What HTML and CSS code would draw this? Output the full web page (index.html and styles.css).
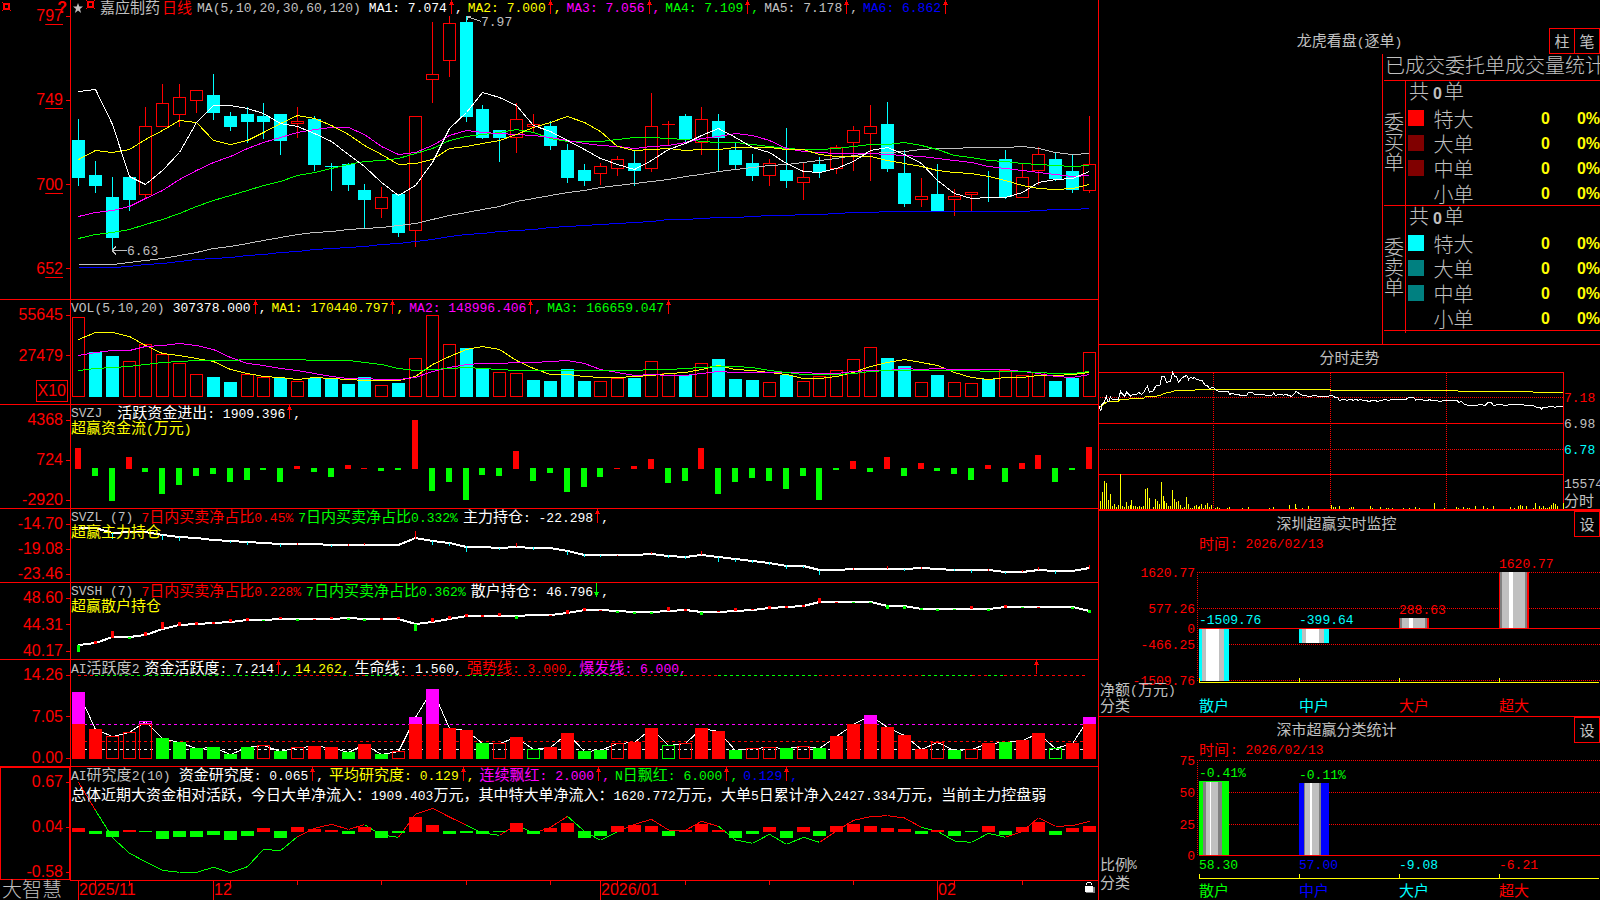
FILE: index.html
```html
<!DOCTYPE html>
<html lang="zh-CN">
<head>
<meta charset="utf-8">
<title>嘉应制药 日线</title>
<link rel="stylesheet" href="styles.css">
</head>
<body>
<main class="desk">
  <section class="charts">
    <article class="panel">
      <div class="axis axis-main">
        <svg class="mark mark-axis" viewBox="0 0 9 9"><path d="M1 1h7v7h-7zM3 3v3h3v-3z" fill="#f00" fill-rule="evenodd"/><path d="M0 0h1v1h-1zM8 8h1v1h-1zM0 8h1v1h-1z" fill="#f00"/></svg>
        <span class="help">?</span>
        <span class="tick">7<u>97</u></span><span class="tick">7<u>49</u></span><span class="tick">7<u>00</u></span><span class="tick">6<u>52</u></span>
      </div>
      <div class="plot">
        <svg id="kline" viewBox="71 0 1027 299" preserveAspectRatio="none"></svg>
        <header class="head">
          <span class="stock"><svg class="star" viewBox="0 0 10 10"><path d="M5 0l1.3 3.6H10L7 6l1.1 4L5 7.6 1.9 10 3 6 0 3.600h3.700z" fill="#c0c0c0"/></svg><svg class="mark" viewBox="0 0 9 9"><path d="M1 1h7v7h-7zM3 3v3h3v-3z" fill="#f00" fill-rule="evenodd"/><path d="M0 0h1v1h-1zM8 0h1v1h-1zM0 8h1v1h-1zM8 8h1v1h-1z" fill="#f00"/></svg></span>
          <span class="name">嘉应制药<span class="red">日线</span></span>
          <span class="n first">MA(5,10,20,30,60,120)</span>
          <span class="n white">MA1: 7.074<i class="up"></i>,</span>
          <span class="n yellow">MA2: 7.000<i class="up"></i>,</span>
          <span class="n magenta">MA3: 7.056<i class="up"></i>,</span>
          <span class="n green">MA4: 7.109<i class="up"></i>,</span>
          <span class="n">MA5: 7.178<i class="up"></i>,</span>
          <span class="n blue">MA6: 6.862<i class="up"></i></span>
        </header>
      </div>
    </article>

    <article class="panel">
      <div class="axis"><span class="tick">55645</span><span class="tick">27479</span><span class="unit">X10</span></div>
      <div class="plot">
        <svg id="vol" viewBox="71 300 1027 104" preserveAspectRatio="none"></svg>
        <header class="head">
          <span class="n first">VOL(5,10,20)</span>
          <span class="n white">307378.000<i class="up"></i>,</span>
          <span class="n yellow">MA1: 170440.797<i class="up"></i>,</span>
          <span class="n magenta">MA2: 148996.406<i class="up"></i>,</span>
          <span class="n green">MA3: 166659.047<i class="up"></i></span>
        </header>
      </div>
    </article>

    <article class="panel">
      <div class="axis"><span class="tick">4368</span><span class="tick">724</span><span class="tick">-2920</span></div>
      <div class="plot">
        <svg id="flow" viewBox="71 405 1027 103" preserveAspectRatio="none"></svg>
        <header class="head">
          <span class="n wide">SVZJ</span>
          <span class="white">活跃资金进出<span class="n">: 1909.396<i class="up"></i>,</span></span>
          <span class="sub yellow">超赢资金流<span class="n">(</span>万元<span class="n">)</span></span>
        </header>
      </div>
    </article>

    <article class="panel">
      <div class="axis"><span class="tick">-14.70</span><span class="tick">-19.08</span><span class="tick">-23.46</span></div>
      <div class="plot">
        <svg id="major" viewBox="71 509 1027 73" preserveAspectRatio="none"></svg>
        <header class="head">
          <span class="n first">SVZL (7)</span>
          <span class="red"><span class="n">7</span>日内买卖净占比<span class="n">0.45%</span></span>
          <span class="green"><span class="n">7</span>日内买卖净占比<span class="n">0.332%</span></span>
          <span class="white">主力持仓<span class="n">: -22.298<i class="up"></i>,</span></span>
          <span class="sub yellow">超赢主力持仓</span>
        </header>
      </div>
    </article>

    <article class="panel">
      <div class="axis"><span class="tick">48.60</span><span class="tick">44.31</span><span class="tick">40.17</span></div>
      <div class="plot">
        <svg id="retail" viewBox="71 583 1027 76" preserveAspectRatio="none"></svg>
        <header class="head">
          <span class="n first">SVSH (7)</span>
          <span class="red"><span class="n">7</span>日内买卖净占比<span class="n">0.228%</span></span>
          <span class="green"><span class="n">7</span>日内买卖净占比<span class="n">0.362%</span></span>
          <span class="white">散户持仓<span class="n">: 46.796<i class="up down"></i>,</span></span>
          <span class="sub yellow">超赢散户持仓</span>
        </header>
      </div>
    </article>

    <article class="panel">
      <div class="axis"><span class="tick">14.26</span><span class="tick">7.05</span><span class="tick">0.00</span></div>
      <div class="plot">
        <svg id="active" viewBox="71 660 1027 106" preserveAspectRatio="none"></svg>
        <header class="head">
          <span><span class="n">AI</span>活跃度<span class="n">2</span></span>
          <span class="white">资金活跃度<span class="n">: 7.214<i class="up"></i>,</span></span>
          <span class="yellow"><span class="n">14.262,</span></span>
          <span class="white">生命线<span class="n">: 1.560,</span></span>
          <span class="red">强势线<span class="n">: 3.000,</span></span>
          <span class="magenta">爆发线<span class="n">: 6.000,</span></span>
          <i class="up lone"></i>
        </header>
      </div>
    </article>

    <article class="panel">
      <div class="axis selected"><span class="tick">0.67</span><span class="tick">0.04</span><span class="tick">-0.58</span></div>
      <div class="plot">
        <svg id="study" viewBox="71 767 1027 113" preserveAspectRatio="none"></svg>
        <header class="head">
          <span class="first"><span class="n">AI</span>研究度<span class="n">2(10)</span></span>
          <span class="white">资金研究度<span class="n">: 0.065<i class="up"></i>,</span></span>
          <span class="yellow">平均研究度<span class="n">: 0.129<i class="up"></i>,</span></span>
          <span class="magenta">连续飘红<span class="n">: 2.000<i class="up"></i>,</span></span>
          <span class="green"><span class="n">N</span>日飘红<span class="n">: 6.000<i class="up"></i>,</span></span>
          <span class="blue"><span class="n">0.129<i class="up"></i>,</span></span>
          <p class="sub note white">总体近期大资金相对活跃，今日大单净流入：<span class="n">1909.403</span>万元，其中特大单净流入：<span class="n">1620.772</span>万元，大单<span class="n">5</span>日累计净入<span class="n">2427.334</span>万元，当前主力控盘弱</p>
        </header>
      </div>
    </article>

    <footer class="timeline">
      <span class="brand">大智慧</span>
      <svg id="dates" viewBox="70 881 1028 19" preserveAspectRatio="none"></svg>
    </footer>
  </section>

  <aside class="side">
    <section class="orders">
      <header class="bar bar-orders">
        <h2>龙虎看盘<span class="n">(</span>逐单<span class="n">)</span></h2>
        <div class="buttons"><button type="button">柱</button><button type="button">笔</button></div>
      </header>
      <div class="stats">
        <h3>已成交委托单成交量统计</h3>
        <div class="group">
          <div class="side-label">委买单</div>
          <table>
            <tr><th colspan="4" class="total">共<b>0</b>单</th></tr>
            <tr><td class="key"><i class="sw sw-red"></i></td><th>特大</th><td>0</td><td class="pct">0%</td></tr>
            <tr><td class="key"><i class="sw sw-maroon"></i></td><th>大单</th><td>0</td><td class="pct">0%</td></tr>
            <tr><td class="key"><i class="sw sw-maroon"></i></td><th>中单</th><td>0</td><td class="pct">0%</td></tr>
            <tr><td class="key"></td><th>小单</th><td>0</td><td class="pct">0%</td></tr>
          </table>
        </div>
        <div class="group">
          <div class="side-label">委卖单</div>
          <table>
            <tr><th colspan="4" class="total">共<b>0</b>单</th></tr>
            <tr><td class="key"><i class="sw sw-cyan"></i></td><th>特大</th><td>0</td><td class="pct">0%</td></tr>
            <tr><td class="key"><i class="sw sw-teal"></i></td><th>大单</th><td>0</td><td class="pct">0%</td></tr>
            <tr><td class="key"><i class="sw sw-teal"></i></td><th>中单</th><td>0</td><td class="pct">0%</td></tr>
            <tr><td class="key"></td><th>小单</th><td>0</td><td class="pct">0%</td></tr>
          </table>
        </div>
      </div>
    </section>

    <section class="card">
      <header class="bar"><h2>分时走势</h2></header>
      <svg id="trend" viewBox="1099 371 501 138" preserveAspectRatio="none"></svg>
    </section>

    <section class="card card-thick">
      <header class="bar"><h2>深圳超赢实时监控</h2><div class="buttons"><button type="button">设</button></div></header>
      <svg id="monitor" viewBox="1099 537 501 179" preserveAspectRatio="none"></svg>
    </section>

    <section class="card">
      <header class="bar"><h2>深市超赢分类统计</h2><div class="buttons"><button type="button">设</button></div></header>
      <svg id="classes" viewBox="1099 743 501 157" preserveAspectRatio="none"></svg>
    </section>
  </aside>
</main>
<script src="charts.js"></script>
</body>
</html>
```

FILE: styles.css
```css
:root {
  --red: #f00;
  --grey: #c0c0c0;
  --cjk: "Noto Sans CJK SC", sans-serif;
  --mono: "Liberation Mono", monospace;
  --digits: "Liberation Sans", sans-serif;
}

* { box-sizing: border-box; }

body {
  margin: 0;
  background: #000;
  color: var(--grey);
  font: 400 15px/15px var(--cjk);
}

.desk {
  display: grid;
  grid-template-columns: minmax(0, 1098fr) minmax(0, 502fr);
  height: 100vh;
  overflow: hidden;
}

.red { color: #f00; }
.white { color: #fff; }
.yellow { color: #ff0; }
.magenta { color: #f0f; }
.green { color: #0f0; }
.blue { color: #00f; }
.n { font-family: var(--mono); font-size: 13px; white-space: pre; }

/* indicator panels */
.charts {
  display: grid;
  grid-template-rows:
    minmax(0, 299fr) minmax(0, 105fr) minmax(0, 104fr) minmax(0, 74fr)
    minmax(0, 77fr) minmax(0, 107fr) minmax(0, 114fr) minmax(0, 20fr);
}

.panel {
  display: grid;
  grid-template-columns: 71px minmax(0, 1fr);
  border-top: 1px solid var(--red);
}

.panel:first-child { border-top: 0; }

.axis {
  display: flex;
  flex-direction: column;
  align-items: flex-end;
  justify-content: space-between;
  padding-top: 7px;
  border-right: 1px solid var(--red);
  color: var(--red);
  font: 16px/16px var(--digits);
}

.axis-main { position: relative; padding: 8px 0 22px; }
.axis.selected { box-shadow: inset 1px 1px var(--red), inset -1px -1px var(--red); }

.tick { display: flex; align-items: center; }
.tick::after { content: ""; width: 4px; height: 1px; margin-left: 3px; background: var(--red); }
.tick u { text-underline-offset: 3px; text-decoration-skip-ink: none; }

.unit {
  height: 22px;
  margin: -8px 2px 2px 0;
  padding: 2px 1px;
  border: 1px solid var(--red);
}

.help {
  position: absolute;
  top: 0;
  right: 3px;
  font-weight: 700;
}

.mark { width: 9px; height: 9px; shape-rendering: crispEdges; }
.mark-axis { position: absolute; top: 2px; left: 2px; }

.plot { display: grid; min-height: 0; }
.plot > * { grid-area: 1 / 1; min-height: 0; min-width: 0; }

svg { display: block; }
.plot > svg, .card > svg, .timeline > svg {
  width: 100%;
  height: 100%;
  min-height: 0;
  shape-rendering: crispEdges;
}
svg text { font: 13px var(--mono); }
svg .zh { font: 15px var(--cjk); }
svg .date { font: 16px var(--digits); }

.head {
  display: flex;
  flex-wrap: wrap;
  align-content: flex-start;
  column-gap: 5px;
  line-height: 13px;
  white-space: nowrap;
}
.head > span { height: 15px; }
.head > .n { line-height: 17px; }
.first { margin-right: 3px; }
.wide { margin-right: 10px; }
.sub { flex-basis: 100%; height: 15px; }
.note { margin: 5px 0 0; }

.stock { display: flex; gap: 3px; padding-left: 2px; }
.star { width: 10px; height: 10px; margin-top: 3px; }
.name { display: flex; gap: 2px; }

.up {
  display: inline-block;
  width: 8px;
  height: 14px;
  vertical-align: top;
  background:
    linear-gradient(var(--red), var(--red)) 4px 0 / 1px 14px no-repeat,
    linear-gradient(var(--red), var(--red)) 3px 2px / 3px 2px no-repeat,
    linear-gradient(var(--red), var(--red)) 2px 4px / 5px 1px no-repeat;
}
.down { --red: #0f0; transform: rotate(180deg); }
.lone { margin-left: auto; margin-right: 58px; }

.timeline { display: grid; grid-template-columns: 70px minmax(0, 1fr); }
.timeline > svg { border-top: 1px solid var(--red); }
.brand { padding-left: 2px; font-size: 20px; font-weight: 300; line-height: 18px; white-space: nowrap; }

/* right column */
.side {
  display: grid;
  grid-template-rows: minmax(0, 344fr) minmax(0, 165fr) minmax(0, 207fr) minmax(0, 184fr);
  border-left: 1px solid var(--red);
}

.orders { display: flex; flex-direction: column; }

.bar { display: flex; align-items: center; height: 26px; }
.bar h2 {
  flex: 1;
  margin: 0;
  padding-bottom: 3px;
  font-size: 15px;
  font-weight: 400;
  line-height: 15px;
  text-align: center;
}
.buttons { display: flex; }

.bar-orders {
  display: grid;
  grid-template-columns: 1fr auto 1fr;
  margin-top: 28px;
}
.bar-orders h2 { grid-column: 2; padding: 0; }
.bar-orders .buttons { justify-self: end; }

button {
  width: 26px;
  height: 26px;
  padding: 0 0 2px;
  border: 1px solid var(--red);
  background: #000;
  color: var(--grey);
  font: 15px/15px var(--cjk);
}
button + button { margin-left: -1px; }

.stats {
  flex: 1;
  align-self: flex-end;
  width: 218px;
  border-left: 1px solid var(--red);
  overflow: hidden;
}
.stats h3 {
  height: 26px;
  margin: 0;
  padding-left: 2px;
  font-size: 20px;
  font-weight: 300;
  line-height: 22px;
  white-space: nowrap;
}

.group {
  display: grid;
  grid-template-columns: 21px minmax(0, 1fr);
  height: 125px;
  margin-left: 1px;
  border-top: 1px solid var(--red);
}
.group:last-child { height: 126px; border-bottom: 1px solid var(--red); }
.side-label {
  width: 20px;
  padding-top: 31px;
  font-size: 20px;
  font-weight: 300;
  line-height: 20px;
  word-break: break-all;
}

table { width: 100%; height: 124px; border-collapse: collapse; border-left: 1px solid var(--red); }
tr { height: 25px; }
tr:first-child { height: 24px; }
td, th {
  padding: 0 0 5px;
  font-size: 20px;
  font-weight: 300;
  line-height: 19px;
  text-align: left;
  white-space: nowrap;
}
td { color: #ff0; font: 700 16px/19px var(--digits); text-align: right; }
.total { padding-left: 3px; }
.total b { margin: 0 2px 0 4px; font: 700 16px/19px var(--digits); }
.key { width: 28px; }
.pct { width: 50px; }
.sw { display: block; width: 16px; height: 16px; margin-left: 2px; }
.sw-red { background: #f00; }
.sw-maroon { background: #800000; }
.sw-cyan { background: #0ff; }
.sw-teal { background: #008080; }

.card { display: grid; grid-template-rows: 26px minmax(0, 1fr); border-top: 1px solid var(--red); }
.card-thick { border-top-width: 2px; }
```

FILE: charts.js
```js
// Series are stored in thirds of a pixel below each panel's own offset.
const RED = '#f00', GREEN = '#0f0', CYAN = '#0ff', WHITE = '#fff', YELLOW = '#ff0';
const MAGENTA = '#f0f', GREY = '#c0c0c0', DARK = '#808080', BLUE = '#00f';

const cx = i => Math.round(78 + 16.85 * i);
const nums = s => s.trim().split(/\s+/).map(Number);
const rect = (x, y, w, h, fill) => `<rect x="${x}" y="${y}" width="${w}" height="${h}" fill="${fill}"/>`;
const box = (x, y, w, h, c) => `<rect x="${x + .5}" y="${y + .5}" width="${w - 1}" height="${h - 1}" fill="none" stroke="${c}"/>`;
const line = (x1, y1, x2, y2, c, dash = '', w = 1) =>
  `<path d="M${x1} ${y1}L${x2} ${y2}" stroke="${c}" stroke-width="${w}" stroke-dasharray="${dash}"/>`;
const text = (x, y, s, c, cls = '', anchor = 'start') =>
  `<text x="${x}" y="${y}" fill="${c}" class="${cls}" text-anchor="${anchor}">${s}</text>`;
const poly = (pts, c, w = 1) =>
  `<polyline points="${pts.map(p => p.join()).join(' ')}" fill="none" stroke="${c}" stroke-width="${w}"/>`;
const series = (s, off, c, w = 1) =>
  poly(nums(s).map((v, i) => [cx(i) + .5, off + Math.round(v / 3) + (w === 1 ? .5 : 0)]), c, w);
const put = (id, parts) => { document.getElementById(id).innerHTML = parts.join(''); };

// Daily candles: kind, body top, body bottom, high, low
const candles = `c420,534,357,558 c525,558,483,579 c591,714,531,750 c531,600,531,633 r378,584,321,598 r310,380,252,380
r292,344,252,381 r271,302,271,339 c285,339,222,360 c348,381,336,393 c342,366,321,429 c348,366,309,417 c342,423,342,465
r364,371,321,414 c357,495,348,513 c498,501,489,573 c492,555,489,573 c570,600,552,688 r591,626,561,654 c582,699,582,711
r349,692,349,741 r223,239,66,309 r70,182,48,231 c66,351,48,366 c327,414,315,417 c390,414,390,486 r358,412,309,459
r373,380,342,398 c378,438,363,450 c450,534,432,549 c510,543,492,558 r499,521,489,555 r478,506,468,528 c489,513,453,558
r379,506,279,516 r373,374,363,438 c348,417,342,429 r358,428,321,465 c363,414,342,513 c450,495,426,507 c489,528,462,543
r490,527,477,558 c510,543,384,564 r532,548,490,600 c492,516,471,534 r442,506,435,522 r391,428,378,514 r379,401,315,543
c372,507,306,516 c519,612,450,621 r589,599,534,621 c582,633,492,636 r589,599,567,648 r577,584,577,633 c591,594,513,606
c477,591,450,597 r532,593,492,593 r463,512,441,555 c477,537,459,543 c513,570,462,579 r493,572,348,579`.trim().split(/\s+/);

put('kline', [
  ...candles.map((s, i) => {
    const [t, b, hi, lo] = s.slice(1).split(',').map(v => Math.floor(v / 3));
    const x = cx(i);
    if (s[0] === 'c') return rect(x, hi, 1, lo - hi, CYAN) + rect(x - 6, t, 13, b - t, CYAN);
    const body = b - t < 1 ? rect(x - 6, t, 13, 1, RED) : box(x - 6, t, 13, b - t + 1, RED);
    return body + rect(x, hi, 1, t - hi, RED) + rect(x, b, 1, Math.max(0, lo - b), RED);
  }),
  series('805 805 805 802 796 793 787 781 778 774 769 766 760 757 751 748 745 740 736 733 727 720 712 706 703 697 694 689 685 681 677 674 671 668 665 661 659 656 655 653 650 649 647 646 644 641 640 639 637 637 637 637 637 637 637 637 637 634 631 631 628', -1, BLUE),
  series('794 794 794 790 784 778 769 760 748 742 733 724 715 706 700 695 691 688 683 679 673 661 649 638 629 620 607 598 589 580 573 565 559 553 547 539 532 524 517 511 505 499 495 490 484 478 469 463 458 455 451 448 448 445 445 445 442 448 460 466 463', -1, GREY),
  series('718 706 700 691 676 661 643 622 604 589 574 559 547 528 520 508 496 487 482 478 463 446 424 412 406 400 391 398 418 427 427 427 419 415 415 418 421 425 428 430 436 440 446 451 451 448 442 436 434 430 437 450 468 475 482 487 493 496 499 502 499', -1, GREEN),
  series('650 638 634 622 598 572 541 514 490 470 448 428 415 400 390 385 385 404 441 466 458 438 409 394 398 403 406 409 415 424 433 439 442 448 442 437 430 418 410 401 409 422 446 455 460 461 463 463 466 468 472 478 484 488 500 508 514 520 526 530 529', -1, MAGENTA),
  series('479 454 458 451 420 394 364 370 424 436 422 399 371 349 358 379 404 437 464 496 492 479 446 442 433 424 406 385 368 352 370 397 440 454 451 448 454 451 451 445 445 445 451 451 465 472 470 472 482 493 500 514 518 523 530 542 559 567 571 566 556', -1, YELLOW),
  series('277 271 375 530 556 512 460 370 319 319 328 343 373 380 401 427 466 502 548 589 557 490 388 338 280 293 318 379 397 422 449 476 496 511 482 449 433 408 388 413 443 458 493 516 520 506 485 452 445 466 493 542 583 598 595 595 578 549 541 538 517', -1, WHITE),
  `<path d="M467 16.500L481 21.500M467 16v4M467 16.500h4M112 250.500h15M112 250.500l4-4M112 250.500l4 4" stroke="${GREY}" fill="none"/>`,
  text(481, 26, '7.97', GREY), text(127, 255, '6.63', GREY)
]);

// Volume
const vols = 'r66 c171 c183 r198 r148 r178 r205 r238 c246 c261 r238 r247 c250 r259 c250 c253 c267 c246 r270 c264 r190 r61 r148 c159 c223 r232 r235 c255 c258 c222 c258 r259 r250 c249 r198 r235 c240 r204 c192 c252 c255 r261 c240 r259 r244 r226 r192 r157 c189 c213 r262 c240 r262 r265 c252 r227 r241 r232 c258 c249 r172'.split(' ');
put('vol', [
  ...vols.map((s, i) => {
    const t = 295 + Math.floor(s.slice(1) / 3);
    return s[0] === 'c' ? rect(cx(i) - 6, t, 13, 397 - t, CYAN) : box(cx(i) - 6, t, 13, 397 - t, RED);
  }),
  series('134 115 115 127 154 178 184 193 202 226 238 246 250 254 250 253 256 258 259 259 246 210 187 166 157 166 198 222 241 241 247 250 250 247 244 238 235 226 214 226 229 235 241 253 253 247 235 217 203 196 203 214 235 250 256 250 250 244 244 241 233', 294, YELLOW),
  series('184 175 169 169 157 154 148 154 166 190 208 214 222 229 238 247 253 253 256 256 250 232 220 211 208 208 205 205 202 199 206 226 235 244 241 244 243 238 232 235 235 235 235 235 238 238 232 229 229 223 226 223 226 226 226 226 230 237 246 250 241', 294, MAGENTA),
  series('229 223 220 217 211 205 202 199 199 199 196 196 196 196 199 199 199 205 211 223 229 224 223 220 223 226 229 229 229 229 229 229 229 229 226 226 223 220 217 217 220 229 235 241 241 241 238 232 229 229 229 229 229 229 232 232 232 235 238 238 232', 294, GREEN)
]);

// Money flow
const flow = 'r459 g543 g618 r486 g531 g597 g570 g543 g537 g561 g555 g525 g561 r513 g531 g546 r510 r519 g528 g525 r375 g588 g561 g615 g540 g543 r468 g558 g534 g591 g576 g546 r519 r513 r492 g564 g558 r459 g597 g561 g549 g558 g582 g543 g615 g525 r498 g531 r486 g543 r504 g528 g537 g555 r510 g561 r504 r480 g561 g525 r456'.split(' ');
put('flow', flow.map((s, i) => {
  const v = 295 + s.slice(1) / 3;
  return s[0] === 'r' ? rect(cx(i) - 3, v, 6, 469 - v, RED) : rect(cx(i) - 3, 468, 6, v - 468, GREEN);
}));

// Position lines with per-day marks: index, colour, from, to
const marks = (s, w, off) => s.trim().split(/\s+/).map(m => {
  const [i, c, a, b] = m.split(',');
  const col = { r: RED, c: CYAN, g: GREEN }[c];
  return rect(cx(+i) - (w > 1 ? 1 : 0), off + a / 3, w, (b - a) / 3, col);
});
put('major', [
  series('68 70 84 80 80 91 97 100 104 109 112 113 117 117 118 120 120 119 121 121 100 109 113 125 127 129 125 128 129 139 149 150 150 149 147 152 156 149 157 163 167 173 183 184 195 195 193 191 191 191 189 191 194 195 196 201 200 194 198 198 190', 505, WHITE, 2),
  ...marks('2,c,84,102 3,r,75,84 5,c,90,105 6,c,96,108 9,c,108,114 10,c,111,120 12,c,117,126 13,r,114,120 15,c,120,126 16,r,117,123 17,r,114,120 20,r,78,102 21,c,108,120 22,c,114,123 23,c,123,141 25,c,129,135 26,r,114,126 27,c,126,135 29,c,138,150 30,c,147,156 31,c,150,156 32,r,150,153 34,r,141,147 35,c,150,159 36,c,153,162 37,r,138,150 38,c,156,171 39,c,162,171 40,c,165,174 41,c,171,180 42,c,180,192 43,c,183,189 44,c,195,210 46,r,189,195 48,r,183,192 49,c,192,198 50,r,186,192 52,c,192,198 53,c,195,204 54,r,192,198 55,c,201,207 56,r,195,201 57,r,186,195 58,c,198,207 60,r,180,192', 1, 505)
]);
put('retail', [
  series('421 415 397 397 391 371 361 358 355 350 346 346 342 342 343 341 340 342 343 342 358 350 341 334 332 332 332 331 330 324 316 315 319 321 321 317 315 321 320 317 314 310 307 303 291 291 291 291 302 303 311 312 312 312 312 307 305 305 305 306 317', 505, WHITE, 2),
  ...marks('0,g,420,441 1,r,408,417 2,r,378,399 3,g,396,402 4,r,381,393 5,r,351,372 6,r,351,363 7,r,351,360 8,r,351,357 9,r,342,351 10,r,339,348 11,g,345,348 12,r,336,342 13,g,342,348 14,r,342,345 15,r,336,342 16,g,339,345 17,g,342,348 18,r,339,345 19,r,336,342 20,g,357,378 21,r,339,351 22,r,333,342 23,r,327,336 24,r,330,336 25,r,324,333 26,g,333,342 28,r,330,333 29,r,315,327 30,r,309,318 31,r,315,318 32,g,318,324 33,g,321,327 34,g,321,327 35,r,306,318 36,r,312,318 37,g,321,330 38,r,318,321 39,r,309,318 40,r,312,315 41,r,303,312 42,r,303,309 43,r,300,306 44,r,279,294 45,r,291,294 46,g,291,294 47,g,291,294 48,g,300,312 49,g,303,312 50,g,309,315 51,g,312,318 52,g,312,315 53,r,303,312 54,g,312,318 55,r,300,309 56,g,306,309 57,r,306,309 59,g,306,312 60,g,315,324', 3, 505)
]);

// Activity: R solid red, G solid green, h hollow red, k hollow green
const act = 'R111 R222 h244 h232 h199 G249 G261 G279 G276 G297 G276 h271 G288 h277 R273 R276 G291 R267 G297 h289 R186 R102 R219 R225 G264 h265 R246 k283 R276 R234 G288 G285 h265 R261 R219 k271 h265 R219 R228 G285 h280 h277 G279 h274 G279 R243 R207 R180 R216 R240 R282 h262 G285 h283 R264 G261 R255 R234 k280 R264 R186'.split(' ');
const base = 759, burst = 724;
const spans = [[78, 95, RED], [95, 298, GREEN], [298, 343, RED], [343, 350, GREEN], [350, 365, RED], [365, 399, GREEN], [399, 467, RED], [467, 500, GREEN], [500, 567, RED], [567, 618, GREEN], [618, 668, RED], [668, 684, GREEN], [684, 718, RED], [718, 819, GREEN], [819, 922, RED], [922, 972, GREEN], [972, 988, RED], [988, 1004, GREEN], [1004, 1087, RED]];
put('active', [
  line(78, 724.5, 1088, 724.5, MAGENTA, '3 3'),
  line(78, 741.5, 1088, 741.5, RED, '3 3'),
  line(78, 749.5, 1088, 749.5, WHITE, '3 3'),
  ...spans.map(([a, b, c]) => line(a, 675.5, b, 675.5, c, '3 3')),
  series(act.map(s => s.slice(1)).join(' '), 655, WHITE),
  ...act.map((s, i) => {
    const t = 655 + Math.floor(s.slice(1) / 3), x = cx(i) - 6, k = s[0];
    const c = k === 'G' || k === 'k' ? GREEN : RED;
    if (k === 'R' || k === 'G')
      return rect(x, t, 13, base - t, c) + (t < burst ? rect(x, t, 13, burst - t, MAGENTA) : '');
    return box(x, t, 13, base - t, c) + (t < burst ? box(x, t, 13, burst - t, MAGENTA) + rect(x, burst, 13, 1, RED) : '');
  })
]);

// Study index
const study = 'r519 g537 g546 r525 g531 g552 g546 g546 g540 g555 g543 r519 g549 r516 r521 r525 g537 r516 g549 g534 r486 r510 g537 g534 g537 g531 r504 g537 r519 r504 g549 g543 r513 r510 r513 g543 r525 r507 r525 g549 g537 r516 g549 r516 g543 r513 r507 r513 r519 r522 g537 r525 g543 g531 r513 g540 r516 r501 g540 r519 r513'.split(' ');
const trendLine = nums('382 466 548 595 620 646 652 652 637 653 635 583 587 545 520 508 523 509 540 547 478 460 486 511 534 541 510 535 517 484 529 556 530 508 493 525 526 499 514 555 565 538 568 547 562 528 496 485 482 489 517 529 558 562 535 547 529 488 514 512 499');
const rising = [[0, 1], [13, 17], [19, 23], [25, 26], [27, 29], [32, 38], [44, 50], [55, 60]];
put('study', [
  ...trendLine.slice(1).map((v, i) => {
    const up = rising.some(([a, b]) => i >= a && i < b);
    return poly([[cx(i) + .5, 655 + trendLine[i] / 3], [cx(i + 1) + .5, 655 + v / 3]], up ? RED : GREEN);
  }),
  ...study.map((s, i) => {
    const v = 655 + s.slice(1) / 3;
    return s[0] === 'r' ? rect(cx(i) - 6, v, 13, 832 - v, RED) : rect(cx(i) - 6, 831, 13, v - 831, GREEN);
  })
]);

put('dates', [
  ...[0, 8, 31, 51].map(i => rect(cx(i), 881, 1, 19, RED)),
  ...[1, 3, 9, 13, 18, 23, 28, 32, 36, 41, 46, 52, 56].map(i => rect(cx(i), 881, 1, 4, RED)),
  text(79, 895, '2025/11', RED, 'date'), text(214, 895, '12', RED, 'date'),
  text(601, 895, '2026/01', RED, 'date'), text(938, 895, '02', RED, 'date'),
  rect(1086, 887, 9, 6, DARK), rect(1085, 886, 8, 6, WHITE),
  rect(1087, 882, 4, 1, WHITE), rect(1086, 883, 1, 2, WHITE), rect(1091, 883, 1, 2, WHITE)
]);

// Intraday trend, 3 units per pixel from (1095, 335)
const at = s => s.trim().split(/\s+/).map(p => { const [x, y] = p.split(',').map(Number); return [1095 + x / 3, 335 + y / 3]; });
const ticks = '16,498 22,471 28,438 34,444 40,495 46,477 52,513 58,507 64,516 70,510 76,417 82,513 88,516 94,501 100,513 106,510 109,495 115,513 121,513 127,516 133,513 139,516 145,513 151,462 157,459 163,489 175,516 181,492 187,498 193,507 199,441 205,483 208,498 214,504 220,513 226,513 232,465 238,492 244,501 250,498 256,510 262,519 268,516 274,486 280,507 286,519 292,519 298,513 304,510 310,516 313,513 319,507 325,519 331,510 337,504 343,516 349,510 361,519 367,516 373,519 397,519 403,516 442,519 460,516 523,519 535,516 583,510 601,507 604,519 622,519 640,513 709,510 715,516 721,516 733,513 763,519 769,516 775,516 826,513 832,519 856,516 874,519 880,519 892,519 925,519 943,519 961,516 973,519 1018,504 1048,519 1084,516 1090,519 1105,516 1117,519 1123,519 1141,513 1165,513 1177,519 1195,513 1246,516 1258,519 1270,513 1276,510 1282,513 1294,513 1315,519 1321,504 1333,513 1339,519 1345,513 1351,519 1357,519 1363,516 1369,510 1375,504 1381,507 1387,513 1405,504';
put('trend', [
  ...[372.5, 423.5, 474.5].map(y => line(1099, y, 1564, y, RED)),
  ...[397.5, 449.5].map(y => line(1100, y, 1564, y, RED, '1 1')),
  ...[1213.5, 1330.5, 1446.5].map(x => line(x, 373, x, 509, RED, '1 1')),
  rect(1563, 372, 1, 137, RED),
  ...at(ticks).map(([x, y]) => rect(Math.floor(x), y, 1, 509 - y, YELLOW)),
  poly(at('13,217 22,212 30,205 40,199 70,199 76,193 100,193 106,190 145,190 152,184 180,184 195,181 208,175 225,172 245,166 298,166 303,163 706,163 708,166 1088,166 1090,169 1313,169 1315,172 1405,172'), YELLOW),
  poly(at('13,214 17,229 21,208 27,203 31,192 34,185 38,200 41,200 46,186 52,193 70,193 77,169 83,178 89,184 95,171 101,178 107,184 112,178 125,178 131,172 140,179 146,172 152,160 157,154 163,172 175,168 182,153 190,150 195,150 200,124 208,124 215,142 226,140 233,112 239,124 245,124 250,142 262,128 275,121 281,134 287,127 293,131 298,127 305,134 322,137 330,150 338,153 343,160 355,157 365,166 372,169 398,168 405,178 410,175 420,178 440,181 455,181 461,172 471,172 478,178 508,178 511,181 530,181 536,174 541,181 554,178 560,178 565,181 570,177 580,181 590,184 597,178 603,169 612,175 620,180 634,181 640,185 660,181 668,184 700,184 710,181 720,187 727,187 733,196 750,193 756,196 765,192 775,196 782,193 790,196 797,193 806,198 811,195 820,199 840,196 847,199 860,196 872,193 880,198 890,193 925,194 935,192 943,187 955,187 962,195 975,192 985,195 1000,196 1003,193 1010,197 1022,195 1033,199 1055,196 1088,198 1092,202 1100,200 1108,208 1120,211 1145,211 1155,208 1170,211 1180,202 1188,202 1195,211 1210,209 1235,211 1245,208 1280,208 1297,213 1305,210 1318,213 1325,217 1335,217 1340,223 1345,216 1355,217 1370,214 1380,217 1390,214 1405,214'), WHITE),
  text(1564, 402, '7.18', RED), text(1564, 428, '6.98', GREY), text(1564, 454, '6.78', CYAN),
  text(1564, 488, '15574', GREY), text(1564, 506, '分时', GREY, 'zh')
]);

// Column made of vertical stripes: [colour, width] pairs
const column = (x, y, h, stripes) => stripes.map(([c, w]) => { const r = rect(x, y, w, h, c); x += w; return r; }).join('');
const yellowAxis = y => line(1199, y, 1599, y, YELLOW) + [1199, 1299, 1399, 1499].map(x => rect(x, y - 4.5, 1, 5, YELLOW)).join('');
const stamp = y => text(1199, y, '时间', RED, 'zh') + text(1230, y - 1, ': 2026/02/13', RED);
const metal = [[RED, 1], [DARK, 2], [GREY, 7], [WHITE, 4], [GREY, 12], [DARK, 2], [RED, 2]];
const steel = [[CYAN, 3], [GREY, 4], [WHITE, 13], [GREY, 5], [CYAN, 5]];

put('monitor', [
  stamp(549),
  ...[572.5, 608.5, 644.5, 680.5].map(y => line(1197, y, 1600, y, RED, '1 1')),
  line(1197.5, 572, 1197.5, 681, RED, '1 1'),
  text(1195, 577, '1620.77', RED, '', 'end'), text(1195, 613, '577.26', RED, '', 'end'),
  text(1195, 633, '0', RED, '', 'end'), text(1195, 649, '-466.25', RED, '', 'end'), text(1195, 685, '-1509.76', RED, '', 'end'),
  column(1199, 629, 52, steel), column(1299, 629, 14, steel), column(1399, 618, 10, metal), column(1499, 572, 56, metal),
  line(1199, 628.5, 1600, 628.5, RED),
  yellowAxis(682.5),
  text(1199, 624, '-1509.76', CYAN), text(1299, 624, '-399.64', CYAN), text(1399, 614, '288.63', RED), text(1499, 568, '1620.77', RED),
  text(1100, 695, '净额', GREY, 'zh'), text(1130, 694, '(', GREY), text(1138, 695, '万元', GREY, 'zh'), text(1168, 694, ')', GREY),
  text(1100, 711, '分类', GREY, 'zh'),
  text(1199, 711, '散户', CYAN, 'zh'), text(1299, 711, '中户', CYAN, 'zh'), text(1399, 711, '大户', RED, 'zh'), text(1499, 711, '超大', RED, 'zh')
]);

put('classes', [
  stamp(755),
  ...[760.5, 792.5, 824.5].map(y => line(1197, y, 1600, y, RED, '1 1')),
  line(1197.5, 760, 1197.5, 856, RED, '1 1'),
  text(1195, 765, '75', RED, '', 'end'), text(1195, 797, '50', RED, '', 'end'),
  text(1195, 829, '25', RED, '', 'end'), text(1195, 860, '0', RED, '', 'end'),
  column(1199, 781, 74, [[GREEN, 4], [DARK, 3], [GREY, 4], [WHITE, 1], [GREY, 7], [DARK, 4], [GREEN, 7]]),
  rect(1199, 781, 30, 1, GREEN),
  column(1299, 783, 72, [[BLUE, 5], [DARK, 1], [GREY, 5], [WHITE, 2], [GREY, 7], [DARK, 2], [BLUE, 8]]),
  line(1199, 855.5, 1600, 855.5, RED),
  yellowAxis(878.5),
  text(1199, 777, '-0.41%', GREEN), text(1299, 779, '-0.11%', GREEN),
  text(1199, 869, '58.30', GREEN), text(1299, 869, '57.00', BLUE), text(1399, 869, '-9.08', CYAN), text(1499, 869, '-6.21', RED),
  text(1100, 870, '比例', GREY, 'zh'), text(1129, 869, '%', GREY), text(1100, 888, '分类', GREY, 'zh'),
  text(1199, 896, '散户', GREEN, 'zh'), text(1299, 896, '中户', BLUE, 'zh'), text(1399, 896, '大户', CYAN, 'zh'), text(1499, 896, '超大', RED, 'zh')
]);
```
